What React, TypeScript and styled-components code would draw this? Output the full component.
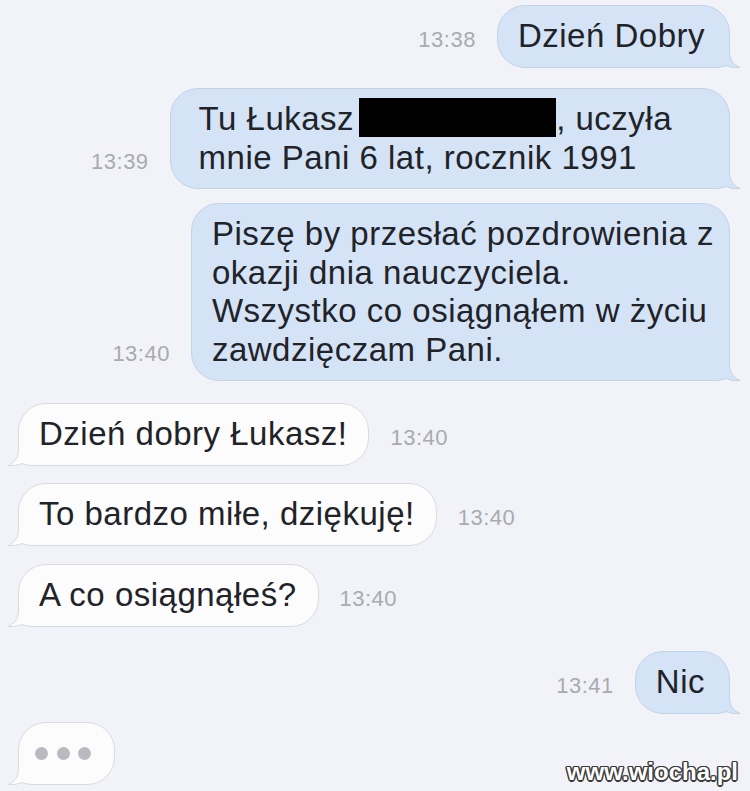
import React from "react";
import styled, { createGlobalStyle } from "styled-components";

type Side = "left" | "right";

const Global = createGlobalStyle`
  html, body {
    margin: 0;
    padding: 0;
    background: #f2f3f8;
  }
  body {
    font-family: "Liberation Sans", Arial, Helvetica, sans-serif;
  }
`;

const Screen = styled.div`
  position: relative;
  width: 750px;
  height: 791px;
  overflow: hidden;
  box-sizing: border-box;
  padding: 5px 20px 0 18px;
  display: flex;
  flex-direction: column;
  background: #f2f3f8;
`;

const Row = styled.div<{ $side: Side; $mt: number }>`
  display: flex;
  flex-direction: row;
  justify-content: ${(p) => (p.$side === "right" ? "flex-end" : "flex-start")};
  align-items: last baseline;
  gap: 21px;
  margin-top: ${(p) => p.$mt}px;
`;

const palette = {
  right: { fill: "#d5e3f6", stroke: "#c4d2e7" },
  left: { fill: "#fcfcfd", stroke: "#d9dbe1" },
};

const Bubble = styled.div<{ $side: Side; $pl?: number; $pr?: number }>`
  position: relative;
  z-index: 0;
  box-sizing: border-box;
  padding: 11px ${(p) => p.$pr ?? (p.$side === "right" ? 24 : 21)}px 11px
    ${(p) => p.$pl ?? 20}px;
  border-radius: 28px;
  background: ${(p) => palette[p.$side].fill};
  border: 1px solid ${(p) => palette[p.$side].stroke};
  font-size: 33px;
  line-height: 38.5px;
  letter-spacing: 0.5px;
  color: #212328;
  white-space: nowrap;
`;

const TailSvg = styled.svg<{ $side: Side }>`
  position: absolute;
  z-index: -1;
  bottom: -1px;
  width: 40px;
  height: 30px;
  overflow: visible;
  ${(p) =>
    p.$side === "right"
      ? "right: -11px;"
      : "left: -11px; transform: scaleX(-1);"}
`;

const Tail: React.FC<{ side: Side }> = ({ side }) => (
  <TailSvg $side={side} viewBox="0 0 40 30" aria-hidden="true">
    <path
      d="M0 0 H29.5 V12 C29.5 21 32 26 40 29.5 C34 30 29 28.8 26 27.5 C22 29.2 18 29.5 14 29.5 H0 Z"
      fill={palette[side].fill}
    />
    <path
      d="M29.5 0 V12 C29.5 21 32 26 40 29.5 C34 30 29 28.8 26 27.5 C22 29.2 18 29.5 14 29.5 H0"
      fill="none"
      stroke={palette[side].stroke}
      strokeWidth={1}
    />
  </TailSvg>
);

const Time = styled.span`
  font-size: 22px;
  letter-spacing: 0.5px;
  color: #a8abb1;
  white-space: nowrap;
`;

const Redacted = styled.span`
  display: inline-block;
  width: 197px;
  height: 39px;
  margin-left: 5px;
  margin-top: -4px;
  vertical-align: -7px;
  background: #000;
`;

const TypingBubble = styled.div`
  position: relative;
  z-index: 0;
  box-sizing: border-box;
  width: 97px;
  height: 63px;
  padding-left: 16px;
  display: flex;
  align-items: center;
  gap: 8.5px;
  border-radius: 28px;
  background: ${palette.left.fill};
  border: 1px solid ${palette.left.stroke};
`;

const Dot = styled.span`
  width: 13px;
  height: 13px;
  border-radius: 50%;
  background: #b8babf;
`;

const Watermark = styled.div`
  position: absolute;
  right: 12px;
  bottom: 7px;
  font-family: "Liberation Sans", Arial, sans-serif;
  font-weight: 700;
  font-size: 24px;
  line-height: 1;
  color: #ffffff;
  text-shadow: 1.5px 0 0 #3a3a3a, -1.5px 0 0 #3a3a3a, 0 1.5px 0 #3a3a3a,
    0 -1.5px 0 #3a3a3a, 1px 1px 0 #3a3a3a, -1px -1px 0 #3a3a3a,
    1px -1px 0 #3a3a3a, -1px 1px 0 #3a3a3a;
`;

type Msg = {
  side: Side;
  time?: string;
  mt: number;
  pl?: number;
  pr?: number;
  content: React.ReactNode;
};

const messages: Msg[] = [
  { side: "right", time: "13:38", mt: 0, content: "Dzień Dobry" },
  {
    side: "right",
    time: "13:39",
    mt: 20.5,
    pl: 28,
    pr: 57,
    content: (
      <>
        Tu Łukasz
        <Redacted />, uczyła
        <br />
        mnie Pani 6 lat, rocznik 1991
      </>
    ),
  },
  {
    side: "right",
    time: "13:40",
    mt: 14,
    pr: 15,
    content: (
      <>
        Piszę by przesłać pozdrowienia z<br />
        okazji dnia nauczyciela.
        <br />
        Wszystko co osiągnąłem w życiu
        <br />
        zawdzięczam Pani.
      </>
    ),
  },
  { side: "left", time: "13:40", mt: 22, content: "Dzień dobry Łukasz!" },
  { side: "left", time: "13:40", mt: 17.5, content: "To bardzo miłe, dziękuję!" },
  { side: "left", time: "13:40", mt: 18.5, content: "A co osiągnąłeś?" },
  { side: "right", time: "13:41", mt: 24.5, content: "Nic" },
];

export default function App() {
  return (
    <>
      <Global />
      <Screen>
        {messages.map((m, i) => (
          <Row key={i} $side={m.side} $mt={m.mt}>
            {m.side === "right" && m.time && <Time>{m.time}</Time>}
            <Bubble $side={m.side} $pl={m.pl} $pr={m.pr}>
              {m.content}
              <Tail side={m.side} />
            </Bubble>
            {m.side === "left" && m.time && <Time>{m.time}</Time>}
          </Row>
        ))}
        <Row $side="left" $mt={8.5}>
          <TypingBubble>
            <Dot />
            <Dot />
            <Dot />
            <Tail side="left" />
          </TypingBubble>
        </Row>
        <Watermark>www.wiocha.pl</Watermark>
      </Screen>
    </>
  );
}
